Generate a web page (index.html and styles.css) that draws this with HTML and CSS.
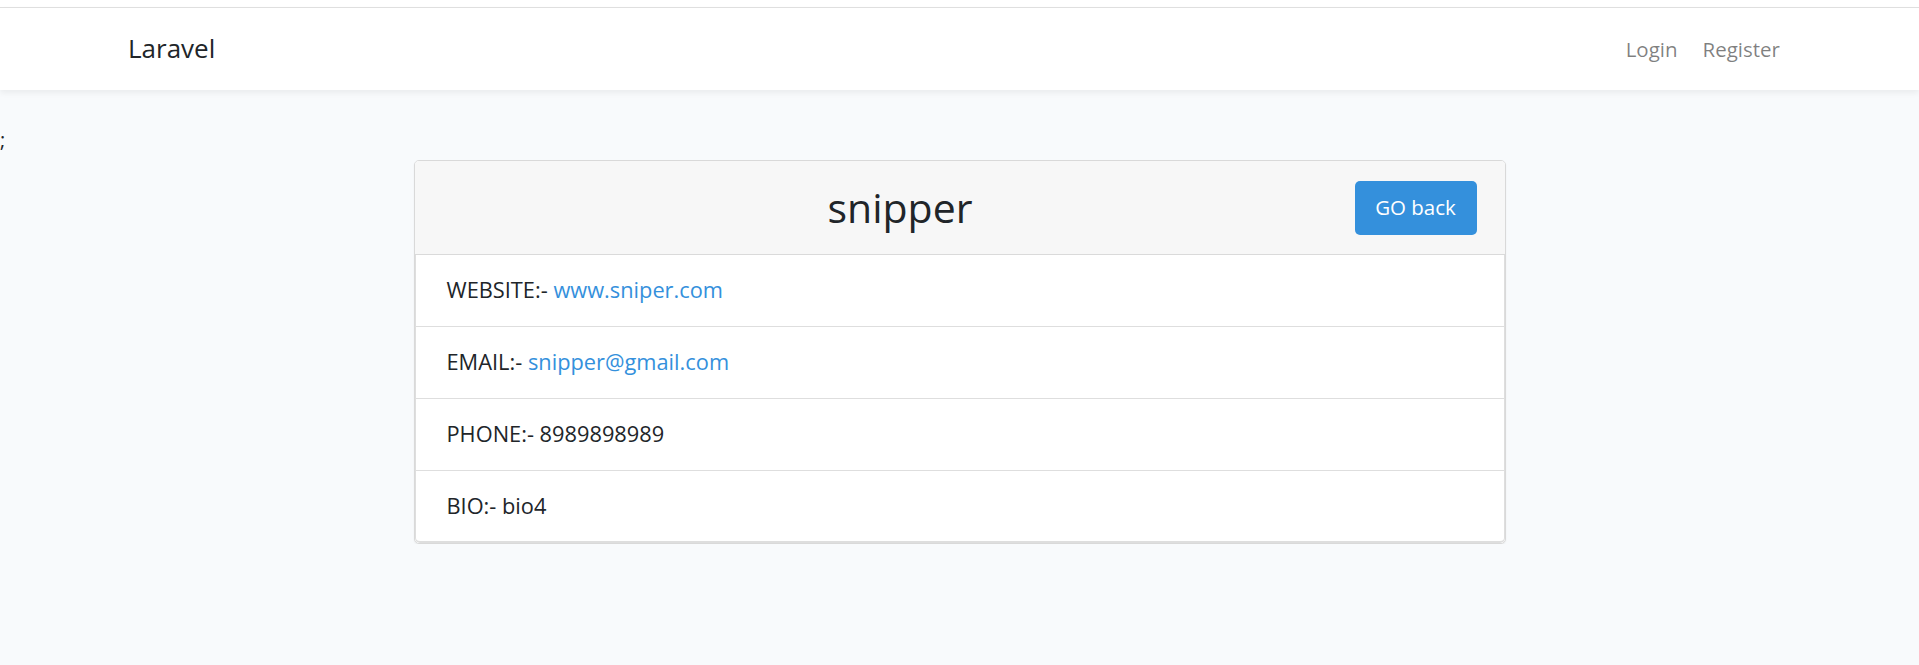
FILE: index.html
```html
<!DOCTYPE html>
<html>
<head>
<meta charset="utf-8">
<link rel="stylesheet" href="styles.css">
</head>
<body>
<div class="topstrip"></div>
<nav class="navbar">
  <a class="brand" href="#">Laravel</a>
  <ul class="nav-links">
    <li><a href="#">Login</a></li>
    <li><a href="#">Register</a></li>
  </ul>
</nav>
<main class="main">
  <div class="stray">;</div>
  <div class="card">
    <div class="card-header">
      <h2 class="title">snipper</h2>
      <a class="btn" href="#">GO back</a>
    </div>
    <ul class="list">
      <li class="item">WEBSITE:- <a href="#">www.sniper.com</a></li>
      <li class="item">EMAIL:- <a href="#">snipper@gmail.com</a></li>
      <li class="item">PHONE:- 8989898989</li>
      <li class="item">BIO:- bio4</li>
    </ul>
  </div>
</main>
</body>
</html>
```
FILE: styles.css
```css
* { box-sizing: border-box; }
html, body { margin: 0; padding: 0; }
body {
  background: #f8fafc;
  font-family: "Open Sans", Lato, sans-serif;
  color: #212529;
  font-size: 18px;
  line-height: 1.6;
}
a { text-decoration: none; }
.topstrip {
  height: 8px;
  background: #fff;
  border-bottom: 1px solid #e0e0e0;
}
.navbar {
  height: 82px;
  background: #fff;
  box-shadow: 0 3px 6px rgba(0,0,0,0.06);
  display: flex;
  align-items: center;
  justify-content: space-between;
  padding: 0 139px 0 128px;
  position: relative;
}
.brand {
  color: #212529;
  font-size: 26px;
}
.nav-links {
  list-style: none;
  margin: 0;
  padding: 0;
  display: flex;
  gap: 25px;
}
.nav-links a {
  color: rgba(0,0,0,0.5);
  font-size: 20.5px;
}
.main {
  padding-top: 35px;
}
.stray {
  line-height: 29px;
  height: 29px;
  font-size: 20px;
}
.card {
  width: 1092px;
  margin: 6px auto 0;
  background: #fff;
  border: 1px solid #d9d9d9;
  border-radius: 5px;
  box-shadow: 0 1px 2px rgba(0,0,0,0.05);
  overflow: hidden;
}
.card-header {
  height: 94px;
  background: #f7f7f7;
  display: flex;
  align-items: center;
  padding: 0 28px 0 19px;
  border-bottom: 1px solid #dadada;
}
.title {
  flex: 1;
  margin: 0;
  padding-left: 12px;
  text-align: center;
  font-weight: 400;
  font-size: 41px;
  line-height: 1.2;
}
.btn {
  width: 122px;
  height: 54px;
  background: #3490dc;
  color: #fff;
  border-radius: 5px;
  display: flex;
  align-items: center;
  justify-content: center;
  font-size: 20.5px;
}
.list {
  list-style: none;
  margin: 0;
  padding: 0;
}
.item {
  height: 72px;
  display: flex;
  align-items: center;
  padding: 0 31px;
  border: 1px solid #dedede;
  border-top: none;
  font-size: 21.8px;
  white-space: pre;
}
.item:last-child { border-bottom-width: 2px; border-radius: 0 0 5px 5px; }
.item a { color: #3490dc; }
```
